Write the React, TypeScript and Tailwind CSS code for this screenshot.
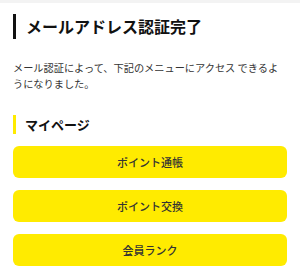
const menuItems = ["ポイント通帳", "ポイント交換", "会員ランク"];

export default function App() {
  return (
    <div
      className="w-[300px] min-h-[278px] bg-white text-[#222]"
      style={{ fontFamily: '"Noto Sans CJK JP", "Noto Sans", sans-serif' }}
    >
      {/* top strip */}
      <div className="h-[3px] bg-[#f3f3f3]" />

      <div className="px-[13px]">
        <h1 className="mt-[11px] border-l-[3px] border-[#111] pl-[10px] text-[16px] leading-[25px] font-bold text-[#111]">
          メールアドレス認証完了
        </h1>

        <p className="mt-[21px] text-[10.2px] leading-[16px] text-[#333]">
          メール認証によって、下記のメニューにアクセス できるようになりました。
        </p>

        <h2 className="mt-[23px] border-l-[3px] border-[#ffeb00] pl-[9px] text-[13px] leading-[19px] font-bold text-[#111]">
          マイページ
        </h2>

        <div className="mt-[12px] flex flex-col gap-[12px]">
          {menuItems.map((label) => (
            <button
              key={label}
              className="h-[32px] w-full rounded-[6px] bg-[#ffeb00] text-[11px] font-medium text-[#333]"
            >
              {label}
            </button>
          ))}
        </div>
      </div>
    </div>
  );
}
